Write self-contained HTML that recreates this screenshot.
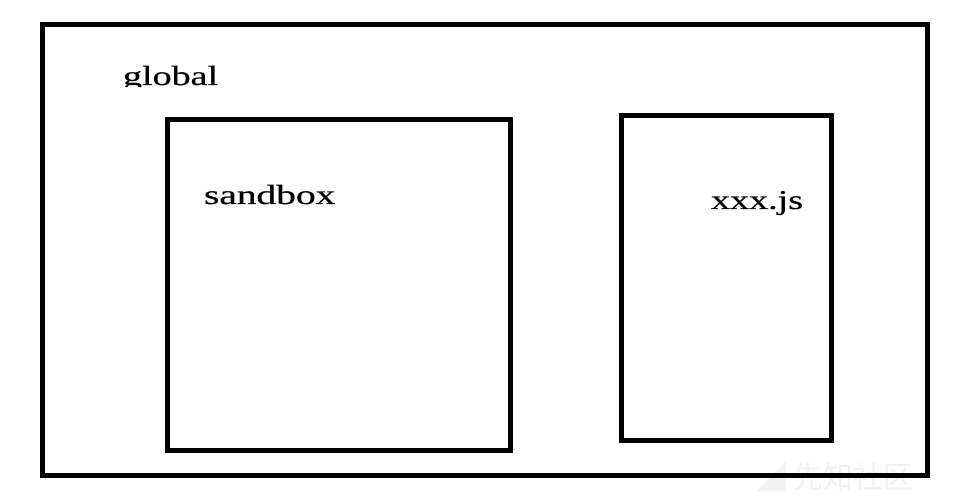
<!DOCTYPE html>
<html><head><style>
body{margin:0;width:959px;height:497px;background:#fff;position:relative;overflow:hidden;font-family:"Liberation Serif",serif;}
.b{position:absolute;border:5px solid #000;box-sizing:border-box;}
.t{position:absolute;font-size:27px;color:#000;line-height:1;transform-origin:left top;transform:scaleX(1.41);-webkit-text-stroke:0.3px #000;}
</style></head><body>
<div class="b" style="left:40px;top:22px;width:890px;height:456px;"></div>
<div class="t" style="left:123px;top:63px;height:24px;overflow:hidden;">global</div>
<div class="b" style="left:165px;top:117px;width:348px;height:336px;"></div>
<div class="t" style="left:204px;top:182px;transform:scaleX(1.46);">sandbox</div>
<div class="b" style="left:619px;top:113px;width:215px;height:330px;"></div>
<div class="t" style="left:711px;top:187px;">xxx.js</div>
<div style="position:absolute;left:756px;top:460px;font-family:'Noto Sans CJK SC',sans-serif;font-size:30px;color:rgba(0,0,0,0.05);line-height:1;">◢ 先知社区</div>
</body></html>
